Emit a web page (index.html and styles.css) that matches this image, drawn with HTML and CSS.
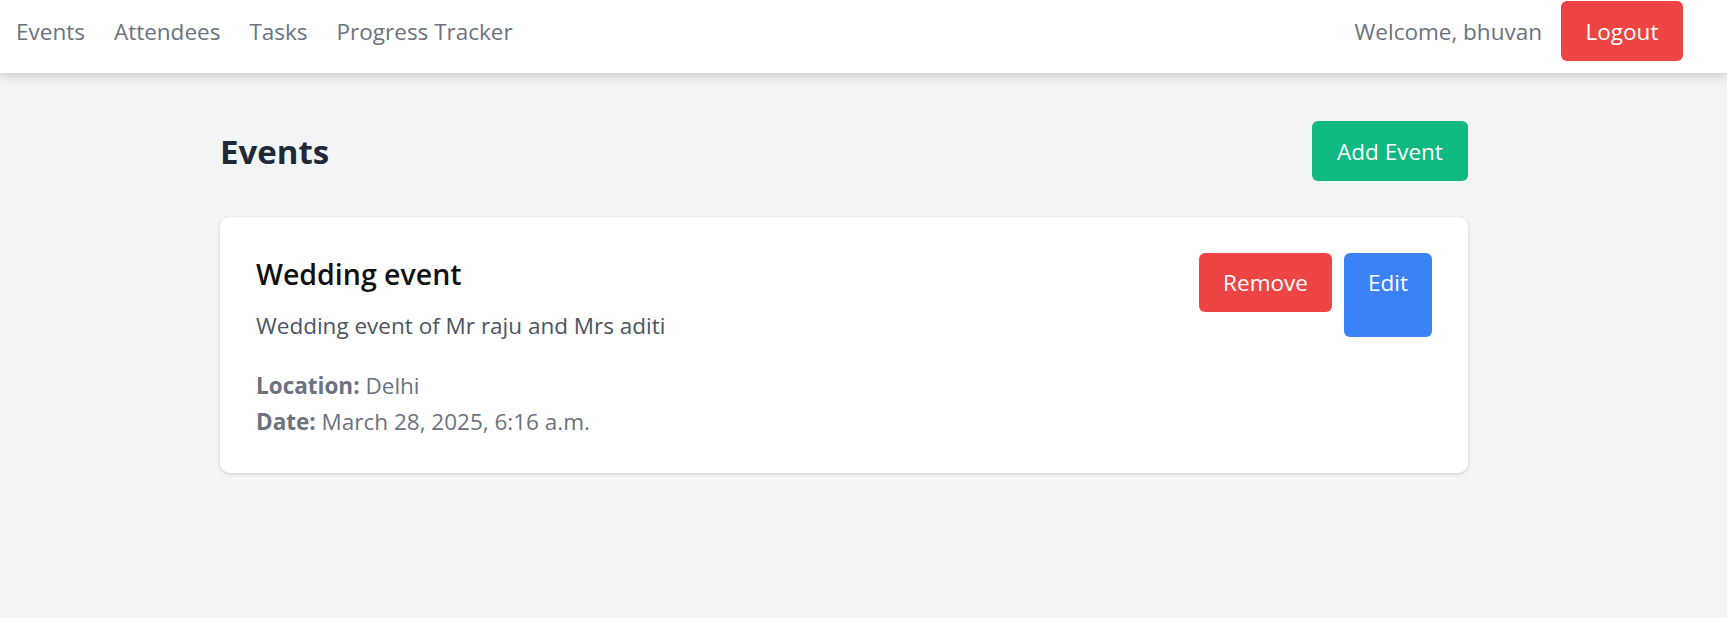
FILE: index.html
```html
<!DOCTYPE html>
<html lang="en">
<head>
<meta charset="utf-8">
<title>Events</title>
<link rel="stylesheet" href="styles.css">
</head>
<body>
<nav class="topbar">
  <div class="nav-links">
    <a href="#" class="nav-link">Events</a>
    <a href="#" class="nav-link">Attendees</a>
    <a href="#" class="nav-link">Tasks</a>
    <a href="#" class="nav-link">Progress Tracker</a>
  </div>
  <div class="nav-user">
    <span class="welcome">Welcome, bhuvan</span>
    <button class="btn btn-red btn-logout">Logout</button>
  </div>
</nav>
<main class="container">
  <div class="page-head">
    <h1 class="page-title">Events</h1>
    <a href="#" class="btn btn-green btn-add">Add Event</a>
  </div>
  <div class="card">
    <div class="card-body">
      <h2 class="event-title">Wedding event</h2>
      <p class="event-desc">Wedding event of Mr raju and Mrs aditi</p>
      <div class="event-meta">
        <p class="meta-line"><strong>Location:</strong> Delhi</p>
        <p class="meta-line"><strong>Date:</strong> March 28, 2025, 6:16 a.m.</p>
      </div>
    </div>
    <div class="card-actions">
      <button class="btn btn-red btn-remove">Remove</button>
      <a href="#" class="btn btn-blue btn-edit">Edit</a>
    </div>
  </div>
</main>
</body>
</html>
```

FILE: styles.css
```css
* { box-sizing: border-box; }
html, body { margin: 0; padding: 0; }
body {
  background: #f3f4f6;
  font-family: "Open Sans", "Noto Sans", sans-serif;
  color: #1f2937;
  height: 618px;
  overflow: hidden;
}
a { text-decoration: none; }

.topbar {
  height: 73px;
  background: #ffffff;
  display: flex;
  justify-content: space-between;
  align-items: flex-start;
  padding: 1px 44px 0 16px;
  box-shadow: 0 4px 12px rgba(0, 0, 0, 0.12), 0 2px 4px rgba(0, 0, 0, 0.06);
  position: relative;
}
.nav-links {
  display: flex;
  align-items: center;
  height: 60px;
  gap: 29px;
}
.nav-link {
  color: #6b7280;
  font-size: 22.5px;
}
.nav-user {
  display: flex;
  align-items: center;
  height: 60px;
  gap: 19px;
}
.welcome {
  color: #6b7280;
  font-size: 22.5px;
}

.btn {
  display: inline-flex;
  align-items: center;
  justify-content: center;
  border: none;
  border-radius: 6px;
  color: #ffffff;
  font-family: inherit;
  font-size: 22.5px;
  cursor: pointer;
}
.btn-red { background: #ef4444; }
.btn-green { background: #10b981; }
.btn-blue { background: #3b82f6; }

.btn-logout {
  width: 122px;
  height: 60px;
}

.container {
  width: 1248px;
  margin: 48px 0 0 220px;
}
.page-head {
  display: flex;
  justify-content: space-between;
  align-items: center;
  height: 60px;
}
.page-title {
  margin: 0;
  font-size: 33px;
  font-weight: 700;
  color: #1f2937;
}
.btn-add {
  width: 156px;
  height: 60px;
  font-size: 22.5px;
}

.card {
  margin-top: 36px;
  background: #ffffff;
  border-radius: 10px;
  box-shadow: 0 1px 4px rgba(0, 0, 0, 0.12), 0 1px 2px rgba(0, 0, 0, 0.06);
  padding: 36px;
  display: flex;
  justify-content: space-between;
  align-items: flex-start;
  height: 256px;
}
.event-title {
  margin: 0;
  font-size: 28.5px;
  font-weight: 600;
  color: #111111;
  line-height: 42px;
}
.event-desc {
  margin: 15px 0 0;
  font-size: 22.5px;
  line-height: 32px;
  color: #4b5563;
}
.event-meta { margin-top: 26px; }
.meta-line {
  margin: 0;
  font-size: 22.5px;
  line-height: 36px;
  color: #6b7280;
}
.meta-line strong { font-weight: 700; }

.card-actions {
  display: flex;
  align-items: flex-start;
  gap: 12px;
}
.btn-remove {
  width: 133px;
  height: 59px;
}
.btn-edit {
  width: 88px;
  height: 84px;
  align-items: flex-start;
  padding-top: 14px;
}
```
